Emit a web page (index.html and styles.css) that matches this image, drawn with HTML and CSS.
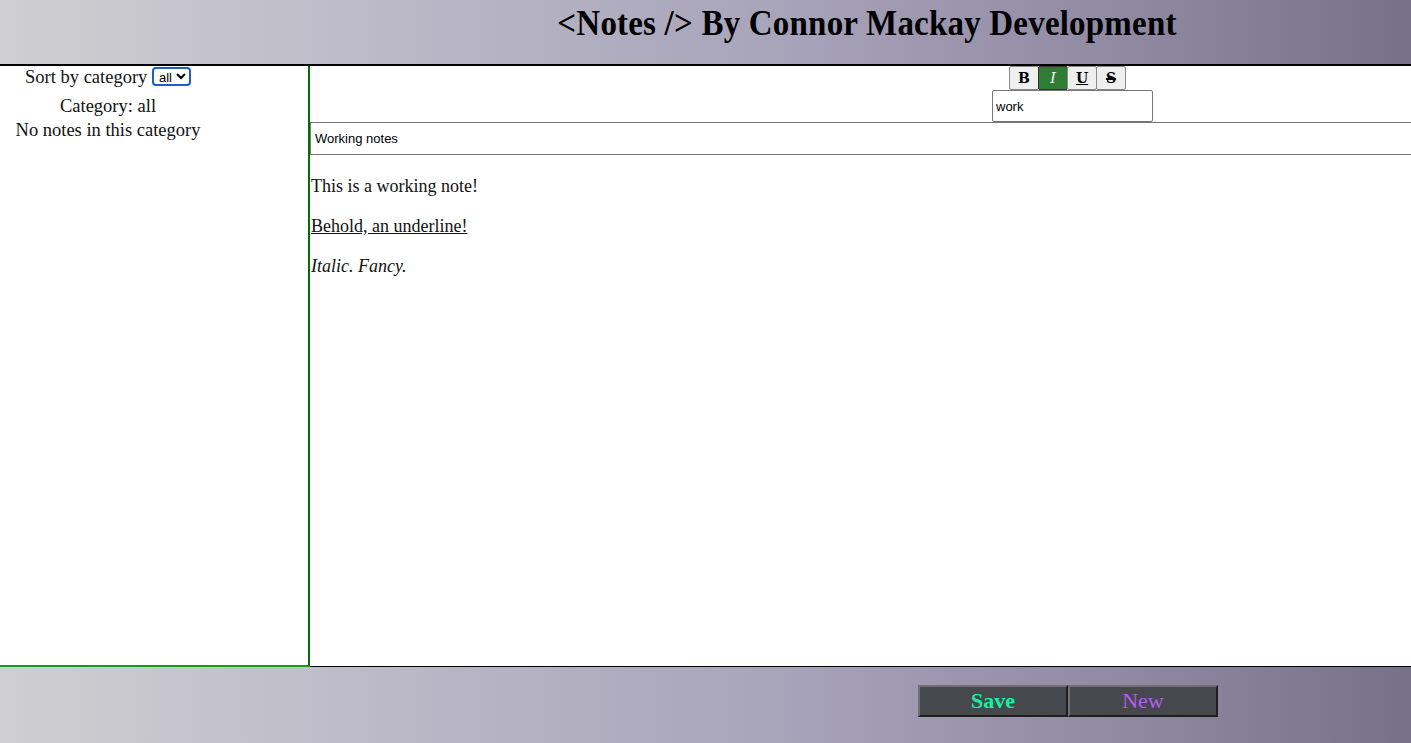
FILE: index.html
```html
<!DOCTYPE html>
<html>
<head>
<meta charset="utf-8">
<title>Notes</title>
<link rel="stylesheet" href="styles.css">
</head>
<body>
<header class="site-header">
  <h1 class="site-title">&lt;Notes /&gt; By Connor Mackay Development</h1>
</header>
<div class="workspace">
  <aside class="sidebar">
    <div class="sidebar-inner">
      <div class="sort-row">Sort by category <select class="sort-select"><option>all</option></select></div>
      <div class="cat-label">Category: all</div>
      <div class="empty-label">No notes in this category</div>
    </div>
  </aside>
  <section class="editor">
    <div class="tools">
      <div class="tools-col">
        <div class="fmt-group">
          <button class="fmt"><b>B</b></button><button class="fmt active"><i>I</i></button><button class="fmt"><u>U</u></button><button class="fmt"><span class="strike">S</span></button>
        </div>
        <input class="cat-input" type="text" value="work">
      </div>
    </div>
    <input class="title-input" type="text" value="Working notes">
    <div class="note-body">
      <p>This is a working note!</p>
      <p><u>Behold, an underline!</u></p>
      <p><i>Italic. Fancy.</i></p>
    </div>
  </section>
</div>
<footer class="site-footer">
  <div class="actions">
    <button class="act act-save">Save</button><button class="act act-new">New</button>
  </div>
</footer>
</body>
</html>
```
FILE: styles.css
```css
* { box-sizing: border-box; }
html, body { margin: 0; padding: 0; }
body {
  width: 1411px;
  height: 743px;
  overflow: hidden;
  font-family: "Liberation Serif", "DejaVu Serif", serif;
  color: #111;
  background: #fff;
}
.site-header, .site-footer {
  background: linear-gradient(90deg, #cfcfd2 0%, #b9b7c6 30%, #a8a4ba 55%, #8f89a2 80%, #767089 100%);
}
.site-header {
  height: 66px;
  border-bottom: 2px solid #000;
  padding-left: 323px;
  display: flex;
  justify-content: center;
}
.site-title {
  margin: 0;
  padding-top: 2px;
  font-family: "Liberation Serif", serif;
  font-weight: bold;
  font-size: 33px;
  line-height: 38px;
  letter-spacing: 0.2px;
  color: #000;
  transform: scaleY(1.1);
  transform-origin: center top;
}
.workspace {
  display: flex;
  height: 601px;
}
.sidebar {
  width: 310px;
  flex: none;
  border-right: 2px solid #007000;
  border-bottom: 2px solid #1a9a1a;
}
.sidebar-inner {
  width: 216px;
  text-align: center;
  font-size: 18.5px;
  line-height: 24px;
}
.sort-row { height: 28px; line-height: 22px; }
.sort-select {
  font-family: "Liberation Sans", Arial, sans-serif;
  font-size: 13px;
  height: 19px;
  border: 2px solid #1f5fc4;
  border-radius: 4px;
  background: #fff;
  color: #000;
  padding: 0 0 0 1px;
  vertical-align: 1px;
}
.cat-label { line-height: 24px; }
.empty-label { line-height: 24px; }
.editor {
  flex: 1;
  min-width: 0;
  overflow: hidden;
  border-bottom: 1px solid #000;
  padding-bottom: 1px;
}
.tools { height: 56px; }
.tools-col {
  margin-left: 682px;
  width: 161px;
}
.fmt-group {
  display: flex;
  margin-left: 17px;
  height: 24px;
}
.fmt {
  width: 30px;
  height: 24px;
  margin: 0 -1px 0 0;
  padding: 0;
  font-family: "DejaVu Serif", serif;
  font-weight: bold;
  font-size: 14px;
  background: #efefef;
  border: 1px solid #8a8a8a;
  border-radius: 2px;
  color: #000;
}
.fmt i { font-weight: normal; }
.strike {
  text-decoration: line-through;
  text-decoration-thickness: 2px;
}
.fmt.active { background: #2f7d32; color: #fff; border-color: #333; }
.cat-input {
  display: block;
  width: 161px;
  height: 32px;
  margin: 0;
  border: 1px solid #767676;
  border-radius: 2px;
  padding: 0 3px;
  font-family: "Liberation Sans", Arial, sans-serif;
  font-size: 13px;
  color: #000;
}
.title-input {
  display: block;
  width: calc(100% + 20px);
  height: 33px;
  margin: 0;
  border: 1px solid #767676;
  padding: 0 4px;
  font-family: "Liberation Sans", Arial, sans-serif;
  font-size: 13px;
  color: #000;
}
.note-body {
  padding: 20px 1px 0;
  font-size: 18px;
  line-height: 22px;
}
.note-body p { margin: 0 0 18px; }
.site-footer {
  height: 76px;
  padding-left: 725px;
  display: flex;
  justify-content: center;
  padding-top: 18px;
}
.actions { display: flex; height: 32px; }
.act {
  width: 150px;
  height: 32px;
  margin: 0;
  padding: 0;
  background: #45484d;
  border: 2px solid;
  border-color: #707070 #1f1f1f #1f1f1f #707070;
  font-family: "Liberation Serif", serif;
  font-size: 22px;
}
.act-save { color: #17f0a0; font-weight: bold; }
.act-new { color: #b45cf0; }
```
